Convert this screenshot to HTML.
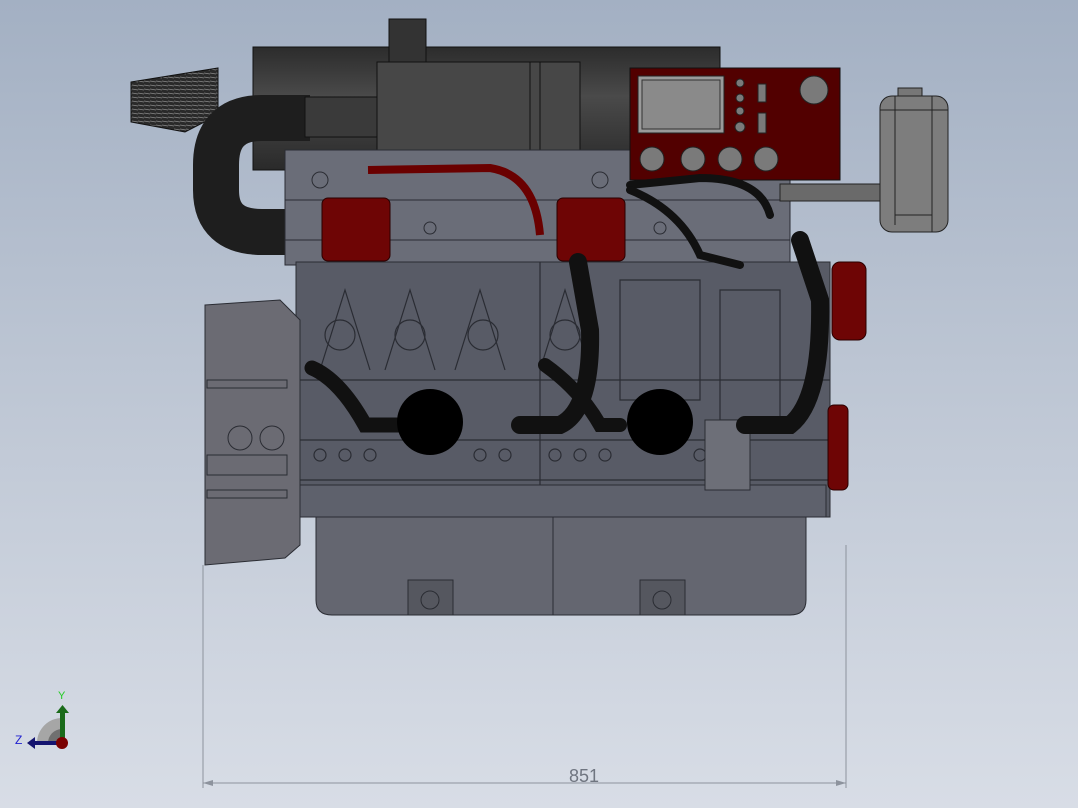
<!DOCTYPE html>
<html><head><style>
html,body{margin:0;padding:0;width:1078px;height:808px;overflow:hidden}
body{background:linear-gradient(#a3b0c3 0%,#bcc5d3 45%,#d8dde6 100%);font-family:"Liberation Sans",sans-serif}
svg{position:absolute;left:0;top:0}
</style></head><body>
<svg width="1078" height="808" viewBox="0 0 1078 808">
<defs>
<pattern id="mesh" width="6" height="4" patternUnits="userSpaceOnUse"><rect width="6" height="4" fill="#2a2a2a"/><line x1="0" y1="1" x2="6" y2="2" stroke="#8a8a8a" stroke-width="0.7"/></pattern>
<linearGradient id="cyl" x1="0" y1="0" x2="0" y2="1"><stop offset="0" stop-color="#2c2c2c"/><stop offset="0.4" stop-color="#4a4a4a"/><stop offset="1" stop-color="#2a2a2a"/></linearGradient>
</defs>
<!-- top muffler -->
<rect x="253" y="47" width="467" height="123" fill="url(#cyl)" stroke="#111"/>
<rect x="389" y="19" width="37" height="44" fill="#333" stroke="#111"/>
<rect x="377" y="62" width="203" height="103" fill="#474747" stroke="#111"/>
<line x1="530" y1="62" x2="530" y2="165" stroke="#111"/>
<line x1="540" y1="62" x2="540" y2="165" stroke="#111"/>
<!-- filter -->
<polygon points="131,82 218,68 218,115 185,132 131,122" fill="url(#mesh)" stroke="#111"/>
<!-- elbow -->
<path d="M310 118 L262 118 Q216 118 216 165 L216 190 Q216 232 262 232 L290 232" fill="none" stroke="#1e1e1e" stroke-width="46"/>
<rect x="305" y="97" width="72" height="40" fill="#3a3a3a" stroke="#111"/>
<!-- head area -->
<rect x="285" y="150" width="505" height="115" fill="#6a6d78" stroke="#2a2c33"/>
<g stroke="#2a2c33" fill="none">
<line x1="285" y1="200" x2="790" y2="200"/><line x1="285" y1="240" x2="790" y2="240"/>
<circle cx="430" cy="228" r="6"/><circle cx="660" cy="228" r="6"/><circle cx="320" cy="180" r="8"/><circle cx="600" cy="180" r="8"/>
</g>
<path d="M368 170 L490 168 Q535 175 540 235" fill="none" stroke="#6a0000" stroke-width="8"/>
<rect x="322" y="198" width="68" height="63" rx="6" fill="#6e0505" stroke="#2a0000"/>
<rect x="557" y="198" width="68" height="63" rx="6" fill="#6e0505" stroke="#2a0000"/>
<!-- red panel -->
<rect x="630" y="68" width="210" height="112" fill="#520000" stroke="#111"/>
<rect x="638" y="76" width="86" height="57" fill="#9a9a9a" stroke="#222"/>
<rect x="642" y="80" width="78" height="49" fill="#8a8a8a" stroke="#333"/>
<g fill="#7a7a7a" stroke="#222"><circle cx="740" cy="83" r="4"/><circle cx="740" cy="98" r="4"/><circle cx="740" cy="111" r="4"/><circle cx="740" cy="127" r="5"/>
<rect x="758" y="84" width="8" height="18"/><rect x="758" y="113" width="8" height="20"/>
<circle cx="814" cy="90" r="14"/><circle cx="652" cy="159" r="12"/><circle cx="693" cy="159" r="12"/><circle cx="730" cy="159" r="12"/><circle cx="766" cy="159" r="12"/></g>
<!-- tank and bracket -->
<rect x="780" y="184" width="100" height="17" fill="#6a6a6a" stroke="#222"/>
<rect x="898" y="88" width="24" height="10" fill="#777" stroke="#222"/>
<rect x="880" y="96" width="68" height="136" rx="12" fill="#7d7d7d" stroke="#222"/>
<line x1="895" y1="96" x2="895" y2="225" stroke="#222"/><line x1="932" y1="96" x2="932" y2="232" stroke="#222"/><line x1="880" y1="110" x2="948" y2="110" stroke="#222"/><line x1="895" y1="215" x2="932" y2="215" stroke="#222"/>
<!-- block -->
<rect x="296" y="262" width="534" height="255" fill="#585b66" stroke="#2a2c33"/>
<g stroke="#2a2c33" fill="none" stroke-width="1.2">
<path d="M320 370 L345 290 L370 370 M385 370 L410 290 L435 370 M455 370 L480 290 L505 370 M540 370 L565 290 L590 370"/>
<circle cx="340" cy="335" r="15"/><circle cx="410" cy="335" r="15"/><circle cx="483" cy="335" r="15"/><circle cx="565" cy="335" r="15"/>
<line x1="296" y1="380" x2="830" y2="380"/><line x1="296" y1="440" x2="830" y2="440"/><line x1="296" y1="480" x2="830" y2="480"/><line x1="540" y1="262" x2="540" y2="517"/>
<circle cx="320" cy="455" r="6"/><circle cx="345" cy="455" r="6"/><circle cx="370" cy="455" r="6"/><circle cx="480" cy="455" r="6"/><circle cx="505" cy="455" r="6"/><circle cx="555" cy="455" r="6"/><circle cx="580" cy="455" r="6"/><circle cx="605" cy="455" r="6"/><circle cx="700" cy="455" r="6"/>
<path d="M620 280 L700 280 L700 400 L620 400 Z M720 290 L780 290 L780 420 L720 420 Z"/>
</g>
<rect x="296" y="485" width="530" height="32" fill="#5e616c" stroke="#2a2c33"/>
<!-- oil pan -->
<path d="M316 517 L806 517 L806 600 Q806 615 790 615 L332 615 Q316 615 316 600 Z" fill="#646670" stroke="#2a2c33"/>
<g stroke="#2a2c33" fill="#55575f"><rect x="408" y="580" width="45" height="35"/><rect x="640" y="580" width="45" height="35"/><circle cx="430" cy="600" r="9"/><circle cx="662" cy="600" r="9"/></g>
<line x1="553" y1="517" x2="553" y2="615" stroke="#2a2c33"/>
<!-- flywheel housing -->
<path d="M205 305 L280 300 L300 320 L300 545 L285 558 L205 565 Z" fill="#6b6b73" stroke="#2a2c33"/>
<g stroke="#2a2c33" fill="none"><rect x="207" y="380" width="80" height="8"/><rect x="207" y="455" width="80" height="20"/><rect x="207" y="490" width="80" height="8"/><circle cx="240" cy="438" r="12"/><circle cx="272" cy="438" r="12"/></g>
<!-- mount plate -->
<rect x="705" y="420" width="45" height="70" fill="#6d6f78" stroke="#2a2c33"/>
<!-- pulley -->
<rect x="832" y="262" width="34" height="78" rx="8" fill="#6e0505" stroke="#2a0000"/>
<rect x="828" y="405" width="20" height="85" rx="6" fill="#6e0505" stroke="#2a0000"/>
<!-- hoses -->
<g fill="none" stroke="#111" stroke-linecap="round">
<path d="M312 368 Q340 380 365 425 L400 425" stroke-width="15"/>
<path d="M520 425 L560 425 Q592 410 590 330 L578 262" stroke-width="18"/>
<path d="M545 365 Q580 390 600 425 L620 425" stroke-width="14"/>
<path d="M745 425 L790 425 Q822 400 820 300 L800 240" stroke-width="18"/>
<path d="M630 185 L700 178 Q760 178 770 215" stroke-width="8"/>
<path d="M630 190 Q680 210 700 255 L740 265" stroke-width="8"/>
</g>
<circle cx="430" cy="422" r="33" fill="#000"/>
<circle cx="660" cy="422" r="33" fill="#000"/>
<!-- dimension -->
<g stroke="#8d939d" stroke-width="1">
<line x1="203" y1="565" x2="203" y2="788"/><line x1="846" y1="545" x2="846" y2="788"/><line x1="203" y1="783" x2="846" y2="783"/>
</g>
<polygon points="203,783 213,780 213,786" fill="#8d939d"/><polygon points="846,783 836,780 836,786" fill="#8d939d"/>
<text x="584" y="782" font-size="18" fill="#6f7580" text-anchor="middle" font-family="Liberation Sans,sans-serif">851</text>
<!-- triad -->
<path d="M62 743 L37 743 A25 25 0 0 1 62 718 Z" fill="#a6a6a6"/>
<path d="M62 743 L48 743 A14 14 0 0 1 62 729 Z" fill="#707070"/>
<rect x="60" y="712" width="5" height="31" fill="#1a6b1a"/><polygon points="56,713 69,713 62.5,705" fill="#1a6b1a"/>
<rect x="34" y="741" width="28" height="4" fill="#141470"/><polygon points="35,737 35,749 27,743" fill="#141470"/>
<circle cx="62" cy="743" r="6" fill="#7a0000"/>
<text x="58" y="699" font-size="11" fill="#22cc22">Y</text>
<text x="15" y="744" font-size="12" fill="#2020d0">Z</text>
</svg>
</body></html>
